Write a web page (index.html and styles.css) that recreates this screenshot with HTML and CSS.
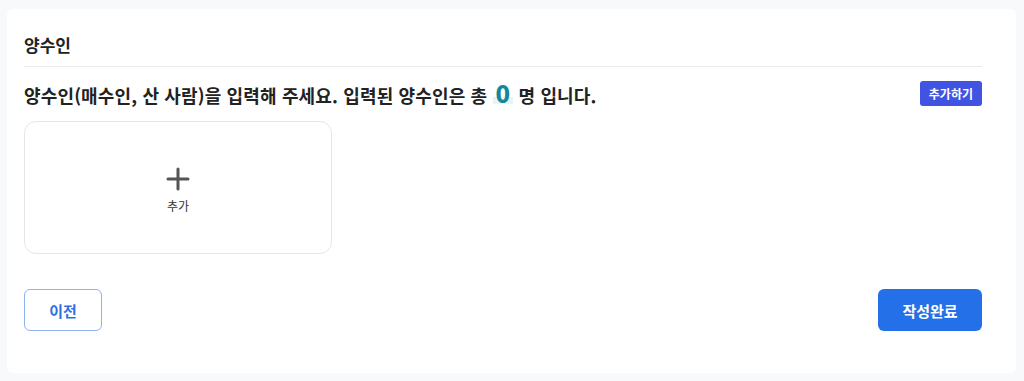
FILE: index.html
```html
<!DOCTYPE html>
<html lang="ko">

<head>
  <meta charset="UTF-8">
  <meta name="viewport" content="width=device-width, initial-scale=1.0">
  <title>양수인 입력</title>
  <link rel="stylesheet" href="styles.css">
</head>

<body>
  <div class="card">
    <h2 class="section-title">양수인</h2>

    <div class="info-row">
      <p class="info-text">양수인(매수인, 산 사람)을 입력해 주세요. 입력된 양수인은 총 <span class="count">0</span> 명 입니다.</p>
      <button class="small-btn" id="add-btn">추가하기</button>
    </div>

    <div class="person-list">
      <div class="add-box" id="add-box">
        <svg class="plus-icon" width="24" height="24" viewBox="0 0 24 24">
          <path d="M12 2v20M2 12h20" stroke="#555" stroke-width="3" stroke-linecap="round" fill="none" />
        </svg>
        <span class="add-label">추가</span>
      </div>
    </div>

    <div class="button-row">
      <button class="prev-btn">이전</button>
      <button class="done-btn">작성완료</button>
    </div>
  </div>
</body>

</html>
```

FILE: styles.css
```css
body {
  font-family: "Noto Sans CJK KR", "Noto Sans", sans-serif;
  margin: 0;
  padding: 9px 8px 8px 7px;
  background-color: #f8f9fa;
  color: #222;
}

.card {
  background-color: #fff;
  border-radius: 6px;
  padding: 24px 34px 40px 17px;
  height: 300px;
}

.section-title {
  margin: 0;
  font-size: 17px;
  font-weight: 700;
  line-height: 24px;
  padding-bottom: 9px;
  border-bottom: 1px solid #ebebeb;
}

.info-row {
  display: flex;
  align-items: center;
  justify-content: space-between;
  margin-top: 11px;
}

.info-text {
  margin: 0;
  font-size: 18px;
  font-weight: 600;
  letter-spacing: 0.15px;
  line-height: 34px;
}

.count {
  display: inline-block;
  font-size: 24px;
  font-weight: 900;
  color: #16879a;
  padding: 0 3px;
  line-height: 22px;
  background: linear-gradient(transparent 70%, #e6f4f5 70%);
}

.small-btn {
  font-family: inherit;
  font-size: 12px;
  font-weight: 600;
  color: #fff;
  background-color: #4153e2;
  border: none;
  border-radius: 3px;
  padding: 0 9px;
  height: 25px;
  margin-top: -4px;
  cursor: pointer;
}

.person-list {
  display: flex;
  margin-top: 9px;
}

.add-box {
  width: 306px;
  height: 125px;
  padding-top: 6px;
  border: 1px solid #e6e6e6;
  border-radius: 12px;
  display: flex;
  flex-direction: column;
  align-items: center;
  justify-content: center;
  gap: 6px;
  cursor: pointer;
}

.plus-icon {
  display: block;
}

.add-label {
  font-size: 12px;
  color: #333;
  line-height: 18px;
}

.button-row {
  display: flex;
  justify-content: space-between;
  margin-top: 35px;
}

.prev-btn,
.done-btn {
  font-family: inherit;
  font-size: 15px;
  font-weight: 700;
  height: 42px;
  border-radius: 6px;
  cursor: pointer;
}

.prev-btn {
  width: 78px;
  background-color: #fff;
  border: 1px solid #8fb2f2;
  color: #2f6fe0;
}

.done-btn {
  width: 104px;
  background-color: #2470e8;
  border: none;
  color: #fff;
}
```
